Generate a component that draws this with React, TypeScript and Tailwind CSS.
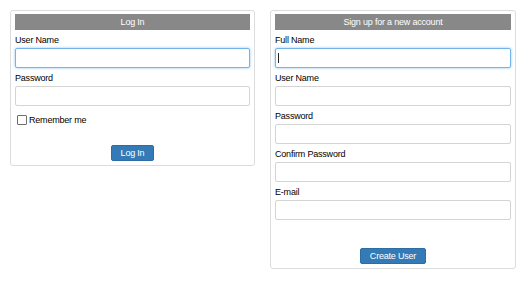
import React from 'react';

const font = { fontFamily: '"Liberation Sans", Arial, sans-serif' };

function Field({
  label,
  type = 'text',
  focused = false,
  caret = false,
}: {
  label: string;
  type?: string;
  focused?: boolean;
  caret?: boolean;
}) {
  return (
    <div className="flex flex-col">
      <label className="block h-[18px] pt-[2px] text-[9px] leading-[16px] tracking-[-0.2px] text-black">
        {label}
      </label>
      <div className="relative">
        <input
          type={type}
          readOnly
          className={
            focused
              ? 'block h-[20px] w-full rounded-[2px] border border-[#74b4ec] bg-white shadow-[0_0_3px_rgba(102,175,233,0.7)] outline-none'
              : 'block h-[20px] w-full rounded-[2px] border border-[#d4d4d4] bg-white outline-none'
          }
        />
        {caret && (
          <span className="absolute left-[3px] top-[5px] h-[10px] w-px bg-[#222]" />
        )}
      </div>
    </div>
  );
}

function Header({ title }: { title: string }) {
  return (
    <div className="h-[16px] bg-[#888888] text-center text-[9px] leading-[16px] tracking-[-0.2px] text-white">
      {title}
    </div>
  );
}

function LoginCard() {
  return (
    <div className="w-[245px] rounded-[3px] border border-[#dcdcdc] px-[4px] pb-[4px] pt-[3px]">
      <Header title="Log In" />
      <Field label="User Name" focused />
      <Field label="Password" type="password" />
      <div className="mt-[9px] flex h-[10px] items-center gap-[2px] pl-[2px]">
        <span className="block h-[10px] w-[10px] rounded-[1px] border border-[#6f6f6f] bg-white" />
        <span className="text-[9px] leading-[10px] tracking-[-0.2px] text-black">Remember me</span>
      </div>
      <div className="mt-[20px] flex justify-center">
        <button className="h-[16px] w-[43px] rounded-[2px] border border-[#2e6da4] bg-[#337ab7] text-[9px] leading-[14px] tracking-[-0.2px] text-white">
          Log In
        </button>
      </div>
    </div>
  );
}

function SignupCard() {
  return (
    <div className="w-[246px] rounded-[3px] border border-[#dcdcdc] px-[4px] pb-[4px] pt-[3px]">
      <Header title="Sign up for a new account" />
      <Field label="Full Name" focused caret />
      <Field label="User Name" />
      <Field label="Password" type="password" />
      <Field label="Confirm Password" type="password" />
      <Field label="E-mail" />
      <div className="mt-[28px] flex justify-center">
        <button className="h-[16px] w-[66px] rounded-[2px] border border-[#2e6da4] bg-[#337ab7] text-[9px] leading-[14px] tracking-[-0.2px] text-white">
          Create User
        </button>
      </div>
    </div>
  );
}

export default function App() {
  return (
    <div className="flex h-[282px] w-[527px] items-start gap-[15px] bg-white p-[10px]" style={font}>
      <LoginCard />
      <SignupCard />
    </div>
  );
}
